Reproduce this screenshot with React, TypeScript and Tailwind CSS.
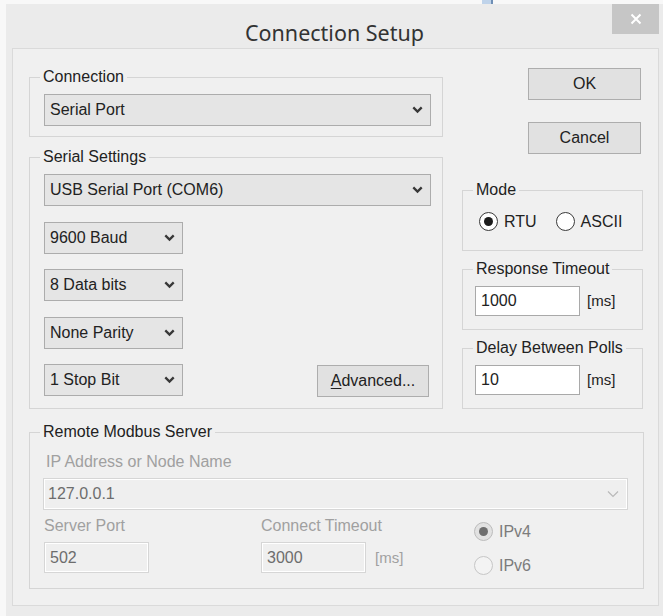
import React from "react";

function Chevron({ muted }: { muted?: boolean }) {
  if (muted) {
    return (
      <svg width="12" height="8" viewBox="0 0 12 8">
        <path d="M1 1.5l5 5 5-5" fill="none" stroke="#b9b9b9" strokeWidth="1.2" />
      </svg>
    );
  }
  return (
    <svg width="11" height="8" viewBox="0 0 11 8">
      <path d="M1.3 1.4L5.5 5.6 9.7 1.4" fill="none" stroke="#383838" strokeWidth="2.3" />
    </svg>
  );
}

function Combo({ value, width }: { value: string; width: string }) {
  return (
    <div className={`${width} h-[32px] flex items-center justify-between border border-[#acacac] bg-[#e5e5e5] pl-[5px] pr-[7px]`}>
      <span>{value}</span>
      <Chevron />
    </div>
  );
}

function Button({ label, width }: { label: React.ReactNode; width: string }) {
  return (
    <div className={`${width} h-[32px] flex items-center justify-center border border-[#adadad] bg-[#e1e1e1]`}>
      {label}
    </div>
  );
}

function Radio({ checked, disabled, label }: { checked?: boolean; disabled?: boolean; label: string }) {
  const ring = disabled
    ? checked
      ? "border-[#bcbcbc] bg-[#e2e2e2]"
      : "border-[#c6c6c6] bg-[#f3f3f3]"
    : "border-[#3a3a3a] bg-white";
  return (
    <div className="flex items-center gap-[6px]">
      <div className={`w-[19px] h-[19px] rounded-full border flex items-center justify-center ${ring}`}>
        {checked && (
          <div className={`w-[9px] h-[9px] rounded-full ${disabled ? "bg-[#6e6e6e]" : "bg-[#1c1c1c]"}`} />
        )}
      </div>
      <span className={disabled ? "text-[#7c7c7c]" : ""}>{label}</span>
    </div>
  );
}

// group box: the legend sits on the top border, the body carries its own padding
function Group({
  title,
  className,
  body,
  children,
}: {
  title: string;
  className: string;
  body: string;
  children: React.ReactNode;
}) {
  return (
    <fieldset className={`border border-[#d5d5d5] ${className}`}>
      <legend className="ml-[10px] px-[3px] leading-[18px]">{title}</legend>
      <div className={body}>{children}</div>
    </fieldset>
  );
}

function Field({ value, muted }: { value: string; muted?: boolean }) {
  return muted ? (
    <div className="w-[105px] h-[31px] flex items-center border border-[#d6d6d6] bg-[#efefef] shadow-[inset_0_0_0_1px_#ffffff] pl-[5px] text-[#6d6d6d]">
      {value}
    </div>
  ) : (
    <div className="w-[105px] h-[30px] flex items-center border border-[#a9a9a9] bg-white pl-[5px]">
      {value}
    </div>
  );
}

export default function App() {
  return (
    <div className="w-[663px] h-[616px] overflow-hidden bg-[#f8f8f8] text-[16px] leading-[18px] text-[#222222] font-['Liberation_Sans',Arial,sans-serif]">
      <div className="h-[4px] flex">
        <div className="ml-[482px] w-[11px] bg-[#bfd3ea] border-r-2 border-[#6f8fb5]" />
      </div>

      <div className="ml-[6px] h-[612px] bg-[#ebebeb] flex flex-col">
        {/* title bar */}
        <div className="h-[44px] grid grid-cols-[1fr_auto_1fr] items-start">
          <div />
          <div className="pt-[16px] text-[21.5px] leading-[26px] text-[#333333] font-['Noto_Sans',sans-serif]">
            Connection Setup
          </div>
          <div className="justify-self-end mr-[4px] w-[47px] h-[30px] bg-[#c6c6c6] flex items-center justify-center">
            <svg width="12" height="12" viewBox="0 0 12 12">
              <path d="M1.5 1.5l9 9M10.5 1.5l-9 9" stroke="#ffffff" strokeWidth="2" />
            </svg>
          </div>
        </div>

        {/* client area */}
        <div className="ml-[6px] mr-[4px] h-[558px] border border-[#dadada] bg-[#f0f0f0] pl-[16px] pt-[19px]">
          <div className="flex gap-[19px]">
            <div className="flex flex-col">
              <Group title="Connection" className="w-[414px] h-[69px]" body="pt-[8px] pl-[14px]">
                <Combo value="Serial Port" width="w-[387px]" />
              </Group>

              <Group title="Serial Settings" className="mt-[11px] w-[414px] h-[261px]" body="pt-[8px] pl-[14px] flex flex-col gap-[15.5px]">
                <Combo value="USB Serial Port (COM6)" width="w-[387px]" />
                <Combo value="9600 Baud" width="w-[139px]" />
                <Combo value="8 Data bits" width="w-[139px]" />
                <Combo value="None Parity" width="w-[139px]" />
                <div className="w-[387px] flex justify-between items-start">
                  <Combo value="1 Stop Bit" width="w-[139px]" />
                  <div className="mt-[1px] mr-[2px]">
                    <Button
                      width="w-[112px]"
                      label={
                        <span>
                          <span className="underline underline-offset-2">A</span>dvanced...
                        </span>
                      }
                    />
                  </div>
                </div>
              </Group>
            </div>

            <div className="flex flex-col w-[181px]">
              <div className="ml-[66px]">
                <Button label="OK" width="w-[113px]" />
              </div>
              <div className="ml-[66px] mt-[22px]">
                <Button label="Cancel" width="w-[113px]" />
              </div>

              <Group title="Mode" className="mt-[27px] h-[70px]" body="pt-[13px] pl-[16px] flex items-center gap-[19px]">
                <Radio checked label="RTU" />
                <Radio label="ASCII" />
              </Group>

              <Group title="Response Timeout" className="mt-[9px] h-[70px]" body="pt-[8px] pl-[12px] flex items-center gap-[7px]">
                <Field value="1000" />
                <span className="text-[15px]">[ms]</span>
              </Group>

              <Group title="Delay Between Polls" className="mt-[9px] h-[70px]" body="pt-[8px] pl-[12px] flex items-center gap-[7px]">
                <Field value="10" />
                <span className="text-[15px]">[ms]</span>
              </Group>
            </div>
          </div>

          <Group title="Remote Modbus Server" className="mt-[14px] w-[615px] h-[166px]" body="pl-[13px]">
            <div className="mt-[12px] ml-[3px] text-[#a0a0a0]">IP Address or Node Name</div>
            <div className="mt-[7px] w-[585px] h-[32px] flex items-center justify-between border border-[#d6d6d6] bg-[#efefef] shadow-[inset_0_0_0_1px_#ffffff] pl-[4px] pr-[8px] text-[#6d6d6d]">
              <span>127.0.0.1</span>
              <Chevron muted />
            </div>
            <div className="mt-[7px] flex items-start">
              <div className="w-[218px] pl-[1px]">
                <div className="text-[#a0a0a0]">Server Port</div>
                <div className="mt-[7px]">
                  <Field value="502" muted />
                </div>
              </div>
              <div className="w-[213px]">
                <div className="text-[#a0a0a0]">Connect Timeout</div>
                <div className="mt-[7px] flex items-center gap-[9px]">
                  <Field value="3000" muted />
                  <span className="text-[15px] text-[#a0a0a0]">[ms]</span>
                </div>
              </div>
              <div className="pt-[5px] flex flex-col gap-[15px]">
                <Radio checked disabled label="IPv4" />
                <Radio disabled label="IPv6" />
              </div>
            </div>
          </Group>
        </div>
      </div>
    </div>
  );
}
